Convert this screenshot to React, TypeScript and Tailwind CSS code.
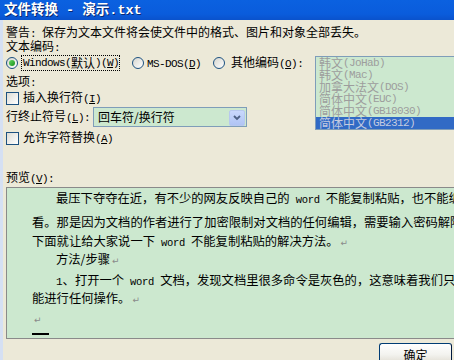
import React from "react";

const M = ({ children }: { children: React.ReactNode }) => (
  <span className="font-['Liberation_Mono',monospace] text-[11px] tracking-[-0.6px]">{children}</span>
);

const Mn = ({ k }: { k: string }) => (
  <M>
    (<span className="underline underline-offset-[1px]">{k}</span>)
  </M>
);

const Radio = ({ checked }: { checked?: boolean }) => (
  <span className="flex h-[12px] w-[12px] shrink-0 items-center justify-center rounded-full border border-[#1c5180] bg-gradient-to-br from-[#d6d6cf] to-white">
    {checked && <span className="h-[6px] w-[6px] rounded-full bg-gradient-to-br from-[#62d862] to-[#139013]" />}
  </span>
);

const Check = () => (
  <span className="h-[13px] w-[13px] shrink-0 border border-[#1c5180] bg-gradient-to-br from-[#dcdcd5] to-white" />
);

const P = () => <span className="ml-[2px] font-['DejaVu_Sans',sans-serif] text-[9px] text-[#8a8a8a]">↵</span>;

const W = () => <span className="font-['Liberation_Mono',monospace] text-[10.5px] tracking-[-0.3px]"> word </span>;

const items = ["韩文", "韩文", "加拿大法文", "简体中文", "简体中文", "简体中文"];
const itemsM = ["(JoHab)", "(Mac)", "(DOS)", "(EUC)", "(GB18030)", "(GB2312)"];

export default function App() {
  return (
    <div className="flex h-[360px] w-[454px] flex-col overflow-hidden bg-[#ece9d8] font-['Noto_Sans_CJK_SC',sans-serif] text-[12px] text-black">
      {/* title bar */}
      <div className="flex h-[20px] shrink-0 items-start bg-[linear-gradient(to_bottom,#0b61e0,#0a5cdc_70%,#0a52cc)] pl-[4px]">
        <div className="h-[17px] whitespace-nowrap text-[13.5px] font-bold leading-[16px] text-white [text-shadow:1px_1px_#0b2a70]">
          文件转换<span className="font-['Liberation_Mono',monospace] text-[13.5px]"> - </span>演示
          <span className="font-['Liberation_Mono',monospace] text-[13.5px]">.txt</span>
        </div>
      </div>

      {/* body */}
      <div className="flex flex-1 flex-col border-l-[3px] border-l-[#d5e0f3] pl-[3px]">
        <div className="mt-[5px] h-[14px] whitespace-nowrap leading-[14px]">
          警告<M>: </M>保存为文本文件将会使文件中的格式、图片和对象全部丢失。
        </div>
        <div className="h-[14px] whitespace-nowrap leading-[14px]">
          文本编码<M>:</M>
        </div>

        <div className="mt-[2px] flex items-start">
          <div className="flex w-[309px] shrink-0 flex-col">
            <div className="flex h-[16px] items-center whitespace-nowrap">
              <Radio checked />
              <span className="ml-[3px] flex h-[16px] w-[99px] items-center border border-dotted border-black pl-[1px] leading-[14px]">
                <M>Windows(</M>默认<M>)</M>
                <Mn k="W" />
              </span>
              <span className="ml-[12px]">
                <Radio />
              </span>
              <span className="ml-[3px] leading-[14px]">
                <M>MS-DOS</M>
                <Mn k="D" />
              </span>
              <span className="ml-[12px]">
                <Radio />
              </span>
              <span className="ml-[6px] leading-[14px]">
                其他编码
                <Mn k="O" />
                <M>:</M>
              </span>
            </div>
            <div className="mt-[3px] h-[14px] leading-[14px]">
              选项<M>:</M>
            </div>
            <div className="mt-[2px] flex h-[16px] items-center whitespace-nowrap">
              <Check />
              <span className="ml-[4px]">
                插入换行符
                <Mn k="I" />
              </span>
            </div>
            <div className="mt-[1px] flex h-[20px] items-center whitespace-nowrap">
              <span className="w-[87px]">
                行终止符号
                <Mn k="L" />
                <M>:</M>
              </span>
              <div className="flex h-[20px] w-[154px] items-center border border-[#7f9db9] bg-[#cce8cf] pl-[4px] pr-[1px]">
                <span className="flex-1">回车符/换行符</span>
                <span className="mt-[2px] flex h-[16px] w-[16px] items-center justify-center rounded-[2px] border border-[#b7c8ee] bg-gradient-to-b from-[#c9d8fc] to-[#b0c4f4]">
                  <svg width="8" height="6" viewBox="0 0 8 6">
                    <polyline points="1,1 4,4 7,1" fill="none" stroke="#4d6185" strokeWidth="1.8" />
                  </svg>
                </span>
              </div>
            </div>
            <div className="mt-[3px] flex h-[16px] items-center whitespace-nowrap">
              <Check />
              <span className="ml-[4px]">
                允许字符替换
                <Mn k="A" />
              </span>
            </div>
          </div>

          {/* listbox */}
          <div className="mt-[1px] w-[150px] shrink-0 border-y border-l border-[#7f9db9] bg-[#cce8cf]">
            {items.map((t, i) => (
              <div
                key={i}
                className={
                  i === 5
                    ? "flex h-[12px] items-center overflow-hidden whitespace-nowrap bg-[#316ac5] pl-[3px] leading-[12px] text-[#c4cbe0]"
                    : "flex h-[12px] items-center overflow-hidden whitespace-nowrap pl-[3px] leading-[12px] text-[#9d9d9d]"
                }
              >
                <span>{t}</span>
                <M>{itemsM[i]}</M>
              </div>
            ))}
          </div>
        </div>

        <div className="mt-[24px] h-[14px] leading-[14px]">
          预览
          <Mn k="V" />
          <M>:</M>
        </div>

        {/* preview */}
        <div className="mt-[3px] h-[152px] w-[470px] shrink-0 overflow-hidden border border-[#8a8a8a] bg-[#cce8cf] pl-[25px] text-[12.3px]">
          <div className="mt-[1px] h-[18px] whitespace-nowrap pl-[24px] leading-[18px]">
            最压下夺夺在近，有不少的网友反映自己的<W />不能复制粘贴，也不能编辑
          </div>
          <div className="mt-[6px] h-[18px] whitespace-nowrap leading-[18px]">
            看。那是因为文档的作者进行了加密限制对文档的任何编辑，需要输入密码解除
          </div>
          <div className="mt-[1px] h-[18px] whitespace-nowrap leading-[18px]">
            下面就让给大家说一下<W />不能复制粘贴的解决方法。
            <P />
          </div>
          <div className="h-[18px] whitespace-nowrap pl-[24px] leading-[18px]">
            方法/步骤
            <P />
          </div>
          <div className="mt-[3px] h-[18px] whitespace-nowrap pl-[24px] leading-[18px]">
            <span className="font-['Liberation_Mono',monospace] text-[11px]">1</span>、打开一个<W />文档，发现文档里很多命令是灰色的，这意味着我们只能
          </div>
          <div className="h-[18px] whitespace-nowrap leading-[18px]">
            能进行任何操作。
            <P />
          </div>
          <div className="mt-[2px] h-[18px] whitespace-nowrap leading-[18px]">
            <P />
          </div>
          <div className="mt-[6px] h-[2px] w-[17px] bg-black" />
        </div>

        {/* bottom */}
        <div className="flex justify-end pr-[2px]">
          <button className="mt-[4px] h-[23px] w-[73px] shrink-0 rounded-[3px] border border-[#003c74] border-r-[#001a40] bg-gradient-to-b from-white via-[#f3f3ef] to-[#dcd8cc] text-[12px] leading-[20px]">
            确定
          </button>
        </div>
      </div>
    </div>
  );
}
